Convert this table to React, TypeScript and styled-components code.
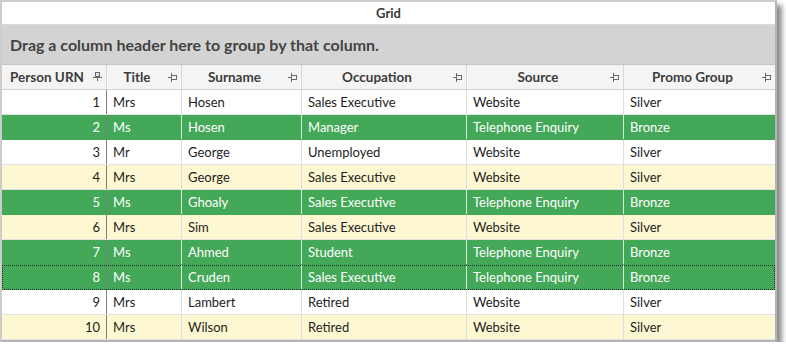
import styled, { createGlobalStyle } from "styled-components";

const GlobalStyle = createGlobalStyle`
body {
  margin: 0;
  background: #ffffff;
}
`

const Window = styled.div`
box-sizing: border-box;
width: 777px;
height: 342px;
border: 2px solid #cdcdcd;
border-right-color: #b4b4b4;
border-bottom-color: #b4b4b4;
background: white;
box-shadow: 5px 5px 5px rgba(0, 0, 0, 0.45);
display: flex;
flex-direction: column;
overflow: hidden;
font-family: Lato, "Liberation Sans", sans-serif;
`

const TitleBar = styled.div`
height: 22px;
flex-shrink: 0;
display: flex;
align-items: center;
justify-content: center;
font-size: 13px;
font-weight: bold;
color: #3a3a3a;
border-bottom: 1px solid #dadada;
`

const GroupPanel = styled.div`
height: 39px;
flex-shrink: 0;
display: flex;
align-items: center;
padding-left: 8px;
background: #d3d3d3;
font-size: 16px;
font-weight: bold;
color: #444444;
border-bottom: 1px solid #c6c6c6;
`

const COLS = "105px 75px 120px 165px 157px 1fr";

const HeaderRow = styled.div`
display: grid;
flex-shrink: 0;
grid-template-columns: ${COLS};
height: 24px;
background: #f4f4f4;
border-bottom: 1px solid #d2d2d2;
`

const HeaderCell = styled.div<{ last?: boolean }>`
box-sizing: border-box;
display: flex;
align-items: center;
border-right: ${p => (p.last ? "none" : "1px solid #d6d6d6")};
padding-right: 3px;
`

const HeaderLabel = styled.span`
flex: 1;
text-align: center;
font-size: 13.5px;
font-weight: bold;
color: #3c3c3c;
white-space: nowrap;
`

const PinBox = styled.span`
width: 11px;
display: flex;
justify-content: center;
`

interface RowProps {
  tone: "white" | "yellow" | "green";
  focused?: boolean;
}

const ROW_BG = { white: "#ffffff", yellow: "#fdf8d1", green: "#43a857" };

const Row = styled.div<RowProps>`
display: grid;
flex-shrink: 0;
grid-template-columns: ${COLS};
height: 25px;
box-sizing: border-box;
border-bottom: 1px solid ${p => (p.tone === "green" ? "#43a857" : "#e2e2e2")};
background: ${p => ROW_BG[p.tone]};
color: ${p => (p.tone === "green" ? "#ffffff" : "#1e1e1e")};
outline: ${p => (p.focused ? "1px dotted #2a2a2a" : "none")};
outline-offset: -1px;
`

const Cell = styled.div<{ frozen?: boolean; num?: boolean; green?: boolean; last?: boolean }>`
box-sizing: border-box;
display: flex;
align-items: center;
justify-content: ${p => (p.num ? "flex-end" : "flex-start")};
padding: 0 6px;
font-size: 13px;
white-space: nowrap;
border-right: ${p =>
  p.last
    ? "none"
    : p.frozen
    ? "1px solid #7e7e7e"
    : p.green
    ? "1px solid #d9eedd"
    : "1px solid #dedede"};
`

const VerticalPin = () => (
  <svg width="9" height="10" viewBox="0 0 9 10">
    <rect x="2.5" y="0.5" width="4" height="4" fill="#e6e6e6" stroke="#6a6a6a" />
    <line x1="0" y1="5.5" x2="9" y2="5.5" stroke="#6a6a6a" />
    <line x1="4.5" y1="5.5" x2="4.5" y2="9" stroke="#6a6a6a" />
  </svg>
);

const SidePin = () => (
  <svg width="10" height="9" viewBox="0 0 10 9">
    <line x1="0" y1="4.5" x2="3" y2="4.5" stroke="#6a6a6a" />
    <line x1="3.5" y1="0" x2="3.5" y2="9" stroke="#6a6a6a" />
    <rect x="3.5" y="2.5" width="5" height="4" fill="none" stroke="#6a6a6a" />
  </svg>
);

const columns = ["Person URN", "Title", "Surname", "Occupation", "Source", "Promo Group"];

type Person = [number, string, string, string, string, string];

const people: Person[] = [
  [1, "Mrs", "Hosen", "Sales Executive", "Website", "Silver"],
  [2, "Ms", "Hosen", "Manager", "Telephone Enquiry", "Bronze"],
  [3, "Mr", "George", "Unemployed", "Website", "Silver"],
  [4, "Mrs", "George", "Sales Executive", "Website", "Silver"],
  [5, "Ms", "Ghoaly", "Sales Executive", "Telephone Enquiry", "Bronze"],
  [6, "Mrs", "Sim", "Sales Executive", "Website", "Silver"],
  [7, "Ms", "Ahmed", "Student", "Telephone Enquiry", "Bronze"],
  [8, "Ms", "Cruden", "Sales Executive", "Telephone Enquiry", "Bronze"],
  [9, "Mrs", "Lambert", "Retired", "Website", "Silver"],
  [10, "Mrs", "Wilson", "Retired", "Website", "Silver"],
];

const toneFor = (p: Person, i: number): RowProps["tone"] => {
  if (p[5] === "Bronze") return "green";
  return i % 2 === 0 ? "white" : "yellow";
};

export default function App() {
  return (
    <>
      <GlobalStyle />
      <Window>
        <TitleBar>Grid</TitleBar>
        <GroupPanel>Drag a column header here to group by that column.</GroupPanel>
        <HeaderRow>
          {columns.map((c, i) => (
            <HeaderCell key={c} last={i === columns.length - 1}>
              <HeaderLabel>{c}</HeaderLabel>
              <PinBox>{i === 0 ? <VerticalPin /> : <SidePin />}</PinBox>
            </HeaderCell>
          ))}
        </HeaderRow>
        {people.map((p, i) => {
          const tone = toneFor(p, i);
          const green = tone === "green";
          return (
            <Row key={p[0]} tone={tone} focused={p[0] === 8}>
              {p.map((v, j) => (
                <Cell
                  key={j}
                  num={j === 0}
                  frozen={j === 0}
                  green={green}
                  last={j === p.length - 1}
                >
                  {v}
                </Cell>
              ))}
            </Row>
          );
        })}
      </Window>
    </>
  );
}
